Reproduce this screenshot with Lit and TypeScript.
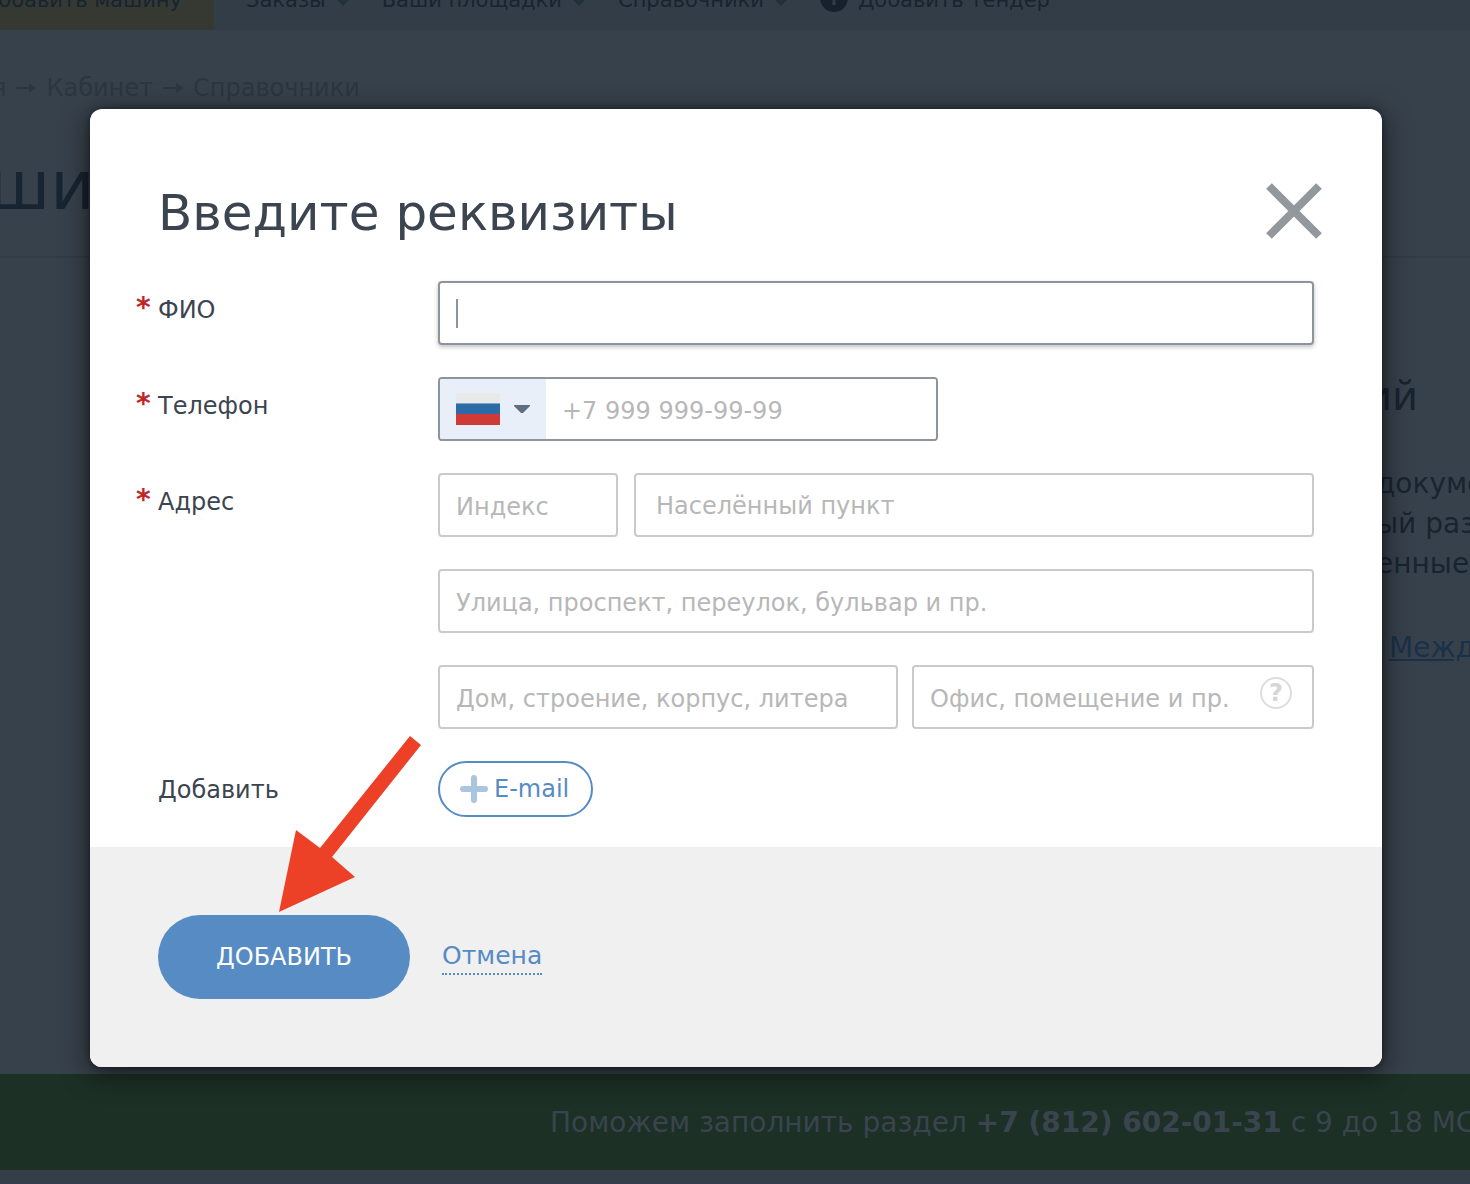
import { LitElement, html, css } from "lit";
import { customElement, state } from "lit/decorators.js";

const navArrow = html`<svg class="nav-arrow" viewBox="0 0 14 12" aria-hidden="true">
  <path d="M0 0V5L7 12L14 5V0Z" />
</svg>`;

const crumbArrow = html`<svg class="crumb-arrow" viewBox="0 0 20 12" aria-hidden="true">
  <path d="M0 5H13V1L20 6L13 11V7H0Z" />
</svg>`;

@customElement("page-backdrop")
export class PageBackdrop extends LitElement {
  static styles = css`
    :host {
      display: flex;
      flex-direction: column;
      min-height: 100vh;
      overflow: hidden;
      background: #37414b;
      color: #172431;
    }
    a {
      color: inherit;
      text-decoration: none;
    }
    .nav {
      display: flex;
      height: 30px;
      overflow: hidden;
      background: #333d47;
      font-size: 21px;
      line-height: 32px;
      white-space: nowrap;
    }
    .nav-cell {
      display: flex;
      align-items: flex-end;
      justify-content: flex-end;
      box-sizing: border-box;
      width: 214px;
      padding: 0 32px 14px 0;
      background: #353932;
    }
    .nav-list {
      display: flex;
      align-items: flex-end;
      gap: 32px;
      padding: 0 0 14px 32px;
    }
    .nav-item {
      display: flex;
      align-items: center;
      gap: 10px;
    }
    .nav-arrow {
      width: 14px;
      height: 12px;
      fill: #23303d;
    }
    .nav-plus {
      width: 28px;
      height: 28px;
    }
    .crumbs {
      display: flex;
      align-items: center;
      gap: 10px;
      margin-left: -8px;
      padding-top: 40px;
      font-size: 24px;
      line-height: 36px;
      color: #2b3640;
      white-space: nowrap;
    }
    .crumb-arrow {
      width: 20px;
      height: 12px;
      fill: #2b3640;
    }
    .title {
      margin: 0 0 0 -12px;
      padding: 36px 0 26px;
      border-bottom: 2px solid #323c46;
      font-size: 68px;
      line-height: 88px;
      font-weight: 400;
    }
    .aside {
      flex: 1;
      align-self: flex-end;
      width: 104px;
      padding-top: 108px;
      font-size: 28px;
      line-height: 40px;
      white-space: nowrap;
    }
    .aside-title {
      margin: 0;
      font-size: 40px;
      line-height: 60px;
      font-weight: 400;
    }
    .aside-text {
      margin: 0;
      padding: 38px 0 44px 10px;
    }
    .aside-link {
      display: block;
      padding-left: 23px;
      color: #1b3049;
      text-decoration: underline;
    }
    .help {
      padding: 2px 0 0 550px;
      border-bottom: 14px solid #343e48;
      background: #1c3025;
      color: #3a444f;
      font-size: 28px;
      line-height: 94px;
      white-space: nowrap;
    }
  `;

  render() {
    return html`
      <nav class="nav">
        <a class="nav-cell" href="#car">Добавить машину</a>
        <div class="nav-list">
          <a class="nav-item" href="#orders">Заказы ${navArrow}</a>
          <a class="nav-item" href="#sites">Ваши площадки ${navArrow}</a>
          <a class="nav-item" href="#refs">Справочники ${navArrow}</a>
          <a class="nav-item" href="#tender">
            <svg class="nav-plus" viewBox="0 0 28 28" aria-hidden="true">
              <circle cx="14" cy="12" r="14" fill="#15212d" />
              <path d="M14 5V19M7 12H21" stroke="#333d47" stroke-width="3" />
            </svg>
            Добавить тендер
          </a>
        </div>
      </nav>
      <div class="crumbs">
        <span>я</span>${crumbArrow}<span>Кабинет</span>${crumbArrow}<span>Справочники</span>
      </div>
      <h1 class="title">ши</h1>
      <aside class="aside">
        <h2 class="aside-title">ий</h2>
        <p class="aside-text">докуме<br />ый раз<br />енные</p>
        <a class="aside-link" href="#mezh">Межд</a>
      </aside>
      <div class="help">Поможем заполнить раздел <b>+7 (812) 602-01-31</b> с 9 до 18 МСК</div>
    `;
  }
}

@customElement("requisites-dialog")
export class RequisitesDialog extends LitElement {
  @state() private name = "";

  static styles = css`
    :host {
      display: block;
      position: relative;
      border-radius: 12px;
      background: #fff;
      color: #3b444f;
      font-size: 24px;
      box-shadow: 0 6px 28px rgba(0, 0, 0, 0.6), 0 0 6px rgba(0, 0, 0, 0.4);
    }
    button,
    input {
      box-sizing: border-box;
      margin: 0;
      font: inherit;
      outline: none;
    }
    button {
      cursor: pointer;
    }
    .head {
      display: flex;
      align-items: center;
      justify-content: space-between;
      padding: 68px 60px 32px 68px;
    }
    .heading {
      margin: 0;
      font-size: 50px;
      line-height: 72px;
      font-weight: 400;
    }
    .close {
      width: 56px;
      height: 60px;
      padding: 0 0 4px;
      border: 0;
      background: none;
    }
    .close svg {
      display: block;
    }
    .body {
      display: grid;
      row-gap: 32px;
      padding: 0 68px 30px 46px;
    }
    .row {
      display: grid;
      grid-template-columns: 22px 280px minmax(0, 1fr);
    }
    .star {
      color: #bf2529;
      font-size: 28px;
      line-height: 54px;
      font-weight: 700;
    }
    .label {
      grid-column: 2;
      height: 56px;
      line-height: 58px;
    }
    .fields {
      display: flex;
      gap: 16px;
    }
    .stack {
      display: grid;
      row-gap: 32px;
    }
    .input {
      flex: 1;
      min-width: 0;
      width: 100%;
      height: 64px;
      padding: 4px 16px 0;
      border: 2px solid #c9cacb;
      border-radius: 4px;
      background: #fff;
      color: #3b444f;
    }
    .input::placeholder {
      color: #b7b7b7;
      opacity: 1;
    }
    .input-active {
      border-color: #8d949b;
      box-shadow: 0 2px 4px rgba(0, 0, 0, 0.25);
      caret-color: transparent;
    }
    .input-empty {
      background: linear-gradient(#8d949b, #8d949b) 16px 16px / 2px 29px no-repeat #fff;
    }
    .index {
      flex: none;
      width: 180px;
    }
    .city {
      padding: 2px 20px 0;
    }
    .pair {
      display: grid;
      grid-template-columns: 460fr 402fr;
      gap: 14px;
    }
    .office {
      display: grid;
      position: relative;
    }
    .hint {
      position: absolute;
      top: 12px;
      right: 22px;
      width: 32px;
      height: 32px;
      padding: 0;
      border: 2px solid #dddddd;
      border-radius: 50%;
      background: #fff;
      color: #d6d6d6;
      font-size: 24px;
      line-height: 28px;
      font-weight: 700;
    }
    .phone {
      display: flex;
      box-sizing: border-box;
      width: 500px;
      height: 64px;
      border: 2px solid #8d949b;
      border-radius: 4px;
      overflow: hidden;
    }
    .country {
      display: flex;
      align-items: center;
      gap: 14px;
      width: 106px;
      padding: 0 16px;
      border: 0;
      background: #e8eff8;
    }
    .phone-input {
      height: 60px;
      border: 0;
      border-radius: 0;
    }
    .email {
      display: flex;
      align-items: center;
      gap: 6px;
      height: 56px;
      padding: 0 22px 0 20px;
      border: 2px solid #568bc4;
      border-radius: 28px;
      background: #fff;
      color: #568bc4;
    }
    .foot {
      display: flex;
      align-items: center;
      gap: 32px;
      padding: 68px;
      border-radius: 0 0 12px 12px;
      background: #f0f0f0;
    }
    .submit {
      height: 84px;
      padding: 0 58px;
      border: 0;
      border-radius: 42px;
      background: #568bc4;
      color: #fff;
      font-size: 24px;
      text-transform: uppercase;
    }
    .cancel {
      border-bottom: 2px dotted #568bc4;
      color: #568bc4;
      font-size: 25px;
      line-height: 34px;
      text-decoration: none;
    }
    .pointer {
      position: absolute;
      left: 189px;
      top: 626px;
      width: 144px;
      height: 178px;
      pointer-events: none;
    }
  `;

  private onName(e: Event) {
    this.name = (e.target as HTMLInputElement).value;
  }

  render() {
    return html`
      <header class="head">
        <h2 class="heading">Введите реквизиты</h2>
        <button class="close" type="button" aria-label="Закрыть">
          <svg width="56" height="56" viewBox="0 0 56 56">
            <path d="M3 3L53 53M53 3L3 53" stroke="#92989c" stroke-width="8" />
          </svg>
        </button>
      </header>
      <div class="body">
        <div class="row">
          <span class="star">*</span>
          <label class="label" for="name">ФИО</label>
          <div class="fields">
            <input
              id="name"
              class="input input-active ${this.name ? "" : "input-empty"}"
              type="text"
              .value=${this.name}
              @input=${this.onName}
            />
          </div>
        </div>
        <div class="row">
          <span class="star">*</span>
          <label class="label" for="phone">Телефон</label>
          <div class="phone">
            <button class="country" type="button" aria-label="Страна">
              <svg width="44" height="32" viewBox="0 0 44 32">
                <rect width="44" height="11" fill="#e8eaea" />
                <rect y="10" width="44" height="12" fill="#2d6aa8" />
                <rect y="10" width="44" height="1" fill="#7fa3c6" />
                <rect y="21" width="44" height="11" fill="#d03a36" />
              </svg>
              <svg width="16" height="8" viewBox="0 0 16 8">
                <path d="M0 0H16V1L9 8H7L0 1Z" fill="#5f6d80" />
              </svg>
            </button>
            <input id="phone" class="input phone-input" type="tel" placeholder="+7 999 999-99-99" />
          </div>
        </div>
        <div class="row">
          <span class="star">*</span>
          <label class="label" for="index">Адрес</label>
          <div class="stack">
            <div class="fields">
              <input id="index" class="input index" type="text" placeholder="Индекс" />
              <input class="input city" type="text" aria-label="Населённый пункт" placeholder="Населённый пункт" />
            </div>
            <input class="input" type="text" aria-label="Улица" placeholder="Улица, проспект, переулок, бульвар и пр." />
            <div class="pair">
              <input class="input" type="text" aria-label="Дом" placeholder="Дом, строение, корпус, литера" />
              <div class="office">
                <input class="input" type="text" aria-label="Офис" placeholder="Офис, помещение и пр." />
                <button class="hint" type="button">?</button>
              </div>
            </div>
          </div>
        </div>
        <div class="row">
          <span class="label">Добавить</span>
          <div class="fields">
            <button class="email" type="button">
              <svg width="28" height="28" viewBox="0 0 28 28" aria-hidden="true">
                <path d="M14 3V25M3 14H25" stroke="#abc5e1" stroke-width="6" stroke-linecap="round" />
              </svg>
              E-mail
            </button>
          </div>
        </div>
      </div>
      <footer class="foot">
        <button class="submit" type="button">Добавить</button>
        <a class="cancel" href="#cancel">Отмена</a>
      </footer>
      <svg class="pointer" viewBox="0 0 144 178" aria-hidden="true">
        <path d="M0 177L17 95L41 113L131 1L142 10L53 122L76 142Z" fill="#ec4027" />
      </svg>
    `;
  }
}

@customElement("app-root")
export class AppRoot extends LitElement {
  static styles = css`
    :host {
      display: block;
      position: relative;
      min-height: 100vh;
      overflow: hidden;
      font-family: Verdana, "DejaVu Sans", sans-serif;
    }
    .overlay {
      position: absolute;
      inset: 0;
      padding: 109px 88px 0 90px;
    }
  `;

  render() {
    return html`
      <page-backdrop></page-backdrop>
      <div class="overlay"><requisites-dialog></requisites-dialog></div>
    `;
  }
}
